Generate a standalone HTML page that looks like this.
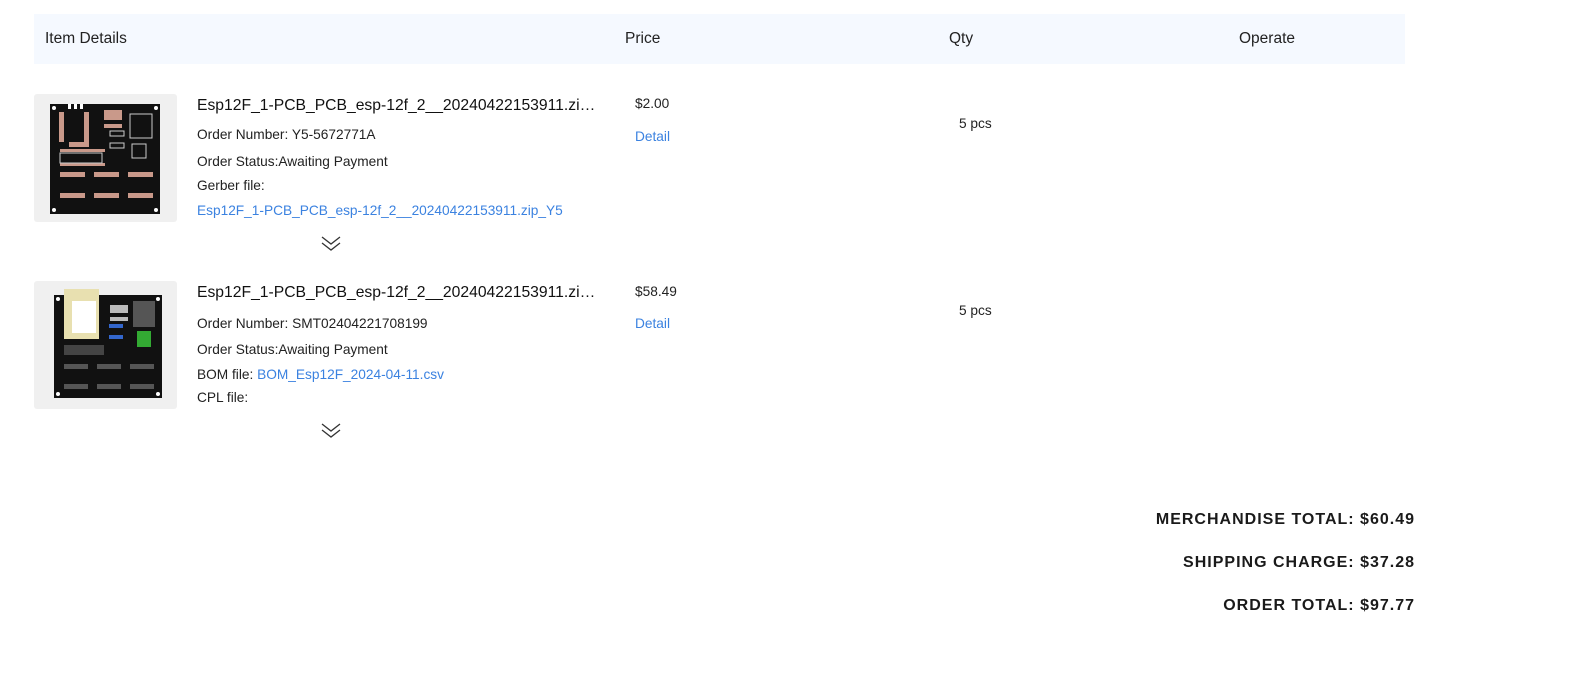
<!DOCTYPE html>
<html><head><meta charset="utf-8"><style>
body{margin:0;width:1590px;height:674px;background:#fff;font-family:"Liberation Sans",Arial,sans-serif;color:#222;position:relative;overflow:hidden}
.a{position:absolute;white-space:nowrap}
.hd{position:absolute;left:34px;top:14px;width:1371px;height:50px;background:#f5f9ff}
.hd span{position:absolute;top:16px;font-size:15.5px;color:#222}
.img{position:absolute;left:34px;width:143px;height:128px;background:#f0f0f0;border-radius:3px}
.t{font-size:15.7px;color:#111}
.s{font-size:13.7px;color:#222}
.l{color:#3b82e0}
.tot{position:absolute;right:175px;font-size:16px;font-weight:bold;color:#1a1a1a;letter-spacing:1px}
</style></head><body>
<div class="hd"><span style="left:11px">Item Details</span><span style="left:591px">Price</span><span style="left:915px">Qty</span><span style="left:1205px">Operate</span></div>

<div class="img" style="top:94px">
<svg width="143" height="128" viewBox="0 0 143 128"><rect x="16" y="10" width="110" height="110" fill="#111"/>
<g fill="#fff"><circle cx="20" cy="14" r="2"/><circle cx="122" cy="14" r="2"/><circle cx="20" cy="116" r="2"/><circle cx="122" cy="116" r="2"/></g>
<g fill="#c9998a"><rect x="25" y="18" width="5" height="30"/><rect x="50" y="18" width="5" height="30"/><rect x="35" y="48" width="20" height="5"/><rect x="70" y="16" width="18" height="10"/><rect x="70" y="30" width="18" height="4"/><rect x="26" y="55" width="45" height="3"/><rect x="26" y="69" width="45" height="3"/><rect x="26" y="78" width="25" height="5"/><rect x="60" y="78" width="25" height="5"/><rect x="94" y="78" width="25" height="5"/><rect x="26" y="99" width="25" height="5"/><rect x="60" y="99" width="25" height="5"/><rect x="94" y="99" width="25" height="5"/></g>
<g fill="none" stroke="#ccc" stroke-width="1"><rect x="26" y="59" width="42" height="10"/><rect x="96" y="20" width="22" height="24"/><rect x="98" y="50" width="14" height="14"/><rect x="76" y="37" width="14" height="5"/><rect x="76" y="49" width="14" height="5"/></g>
<g fill="#fff"><rect x="34" y="10" width="3" height="5"/><rect x="40" y="10" width="3" height="5"/><rect x="46" y="10" width="3" height="5"/></g></svg></div>
<div class="img" style="top:281px">
<svg width="143" height="128" viewBox="0 0 143 128"><rect x="20" y="14" width="108" height="103" fill="#111"/><rect x="30" y="8" width="35" height="50" fill="#e8e0b0"/><rect x="38" y="20" width="24" height="32" fill="#fff"/><rect x="99" y="20" width="22" height="26" fill="#555"/><rect x="103" y="50" width="14" height="16" fill="#3a3"/><rect x="75" y="43" width="14" height="4" fill="#36c"/><rect x="75" y="54" width="14" height="4" fill="#36c"/><rect x="30" y="64" width="40" height="10" fill="#444"/>
<g fill="#fff"><circle cx="24" cy="18" r="2"/><circle cx="124" cy="18" r="2"/><circle cx="24" cy="113" r="2"/><circle cx="124" cy="113" r="2"/></g>
<g fill="#bbb"><rect x="76" y="24" width="18" height="8"/><rect x="76" y="36" width="18" height="4"/></g>
<g fill="#555"><rect x="30" y="83" width="24" height="5"/><rect x="63" y="83" width="24" height="5"/><rect x="96" y="83" width="24" height="5"/><rect x="30" y="103" width="24" height="5"/><rect x="63" y="103" width="24" height="5"/><rect x="96" y="103" width="24" height="5"/></g></svg></div>

<div class="a t" style="left:197px;top:97px">Esp12F_1-PCB_PCB_esp-12f_2__20240422153911.zi…</div>
<div class="a s" style="left:197px;top:127px">Order Number: Y5-5672771A</div>
<div class="a s" style="left:197px;top:154px">Order Status:Awaiting Payment</div>
<div class="a s" style="left:197px;top:178px">Gerber file:</div>
<div class="a s l" style="left:197px;top:203px">Esp12F_1-PCB_PCB_esp-12f_2__20240422153911.zip_Y5</div>
<div class="a s" style="left:635px;top:96px">$2.00</div>
<div class="a s l" style="left:635px;top:129px">Detail</div>
<div class="a s" style="left:959px;top:116px">5 pcs</div>
<svg class="a" style="left:320px;top:235px" width="22" height="16"><path d="M2 2l9 7 9-7M2 8l9 7 9-7" fill="none" stroke="#333" stroke-width="1.3"/></svg>

<div class="a t" style="left:197px;top:284px">Esp12F_1-PCB_PCB_esp-12f_2__20240422153911.zi…</div>
<div class="a s" style="left:197px;top:316px">Order Number: SMT02404221708199</div>
<div class="a s" style="left:197px;top:342px">Order Status:Awaiting Payment</div>
<div class="a s" style="left:197px;top:367px">BOM file: <span class="l">BOM_Esp12F_2024-04-11.csv</span></div>
<div class="a s" style="left:197px;top:390px">CPL file:</div>
<div class="a s" style="left:635px;top:284px">$58.49</div>
<div class="a s l" style="left:635px;top:316px">Detail</div>
<div class="a s" style="left:959px;top:303px">5 pcs</div>
<svg class="a" style="left:320px;top:422px" width="22" height="16"><path d="M2 2l9 7 9-7M2 8l9 7 9-7" fill="none" stroke="#333" stroke-width="1.3"/></svg>

<div class="tot" style="top:511px">MERCHANDISE TOTAL: $60.49</div>
<div class="tot" style="top:554px">SHIPPING CHARGE: $37.28</div>
<div class="tot" style="top:597px">ORDER TOTAL: $97.77</div>
</body></html>
